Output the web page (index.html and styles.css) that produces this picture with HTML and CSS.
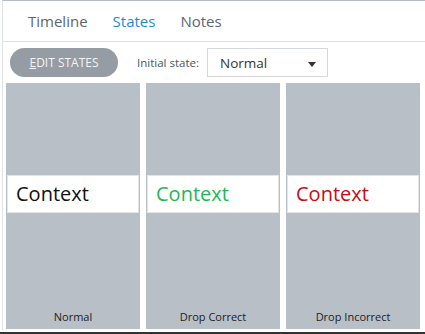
FILE: index.html
```html
<html>
<head>
<title>States</title>
<meta http-equiv="Content-Type" content="text/html; charset=utf-8"/>
<link rel="stylesheet" href="styles.css">
</head>
<body>
<div class="frame">
  <div class="tabs">
    <span class="tab">Timeline</span>
    <span class="tab active">States</span>
    <span class="tab">Notes</span>
  </div>
  <div class="toolbar">
    <span class="btn"><u>E</u>DIT STATES</span>
    <span class="label">Initial state:</span>
    <span class="select">Normal<span class="caret"></span></span>
  </div>
  <div class="cards">
    <div class="card">
      <div class="ctx black">Context</div>
      <div class="name">Normal</div>
    </div>
    <div class="card">
      <div class="ctx green">Context</div>
      <div class="name">Drop Correct</div>
    </div>
    <div class="card">
      <div class="ctx red">Context</div>
      <div class="name">Drop Incorrect</div>
    </div>
  </div>
</div>
<div class="bottom"></div>
</body>
</html>
```
FILE: styles.css
```css
body {
    margin:0;
    background:#fff;
    font-family:"Open Sans", "Noto Sans", sans-serif;
}
.frame {
    margin-left:2px;
    border-left:solid 1px #dde2e8;
    border-top:solid 1px #b5bac8;
    height:330px;
    box-sizing:border-box;
}
.tabs {
    display:flex;
    height:40px;
    border-bottom:solid 1px #e0e3e6;
    padding-left:25px;
    align-items:center;
}
.tab {
    font-size:15px;
    color:#5c6670;
    margin-right:25px;
}
.tab.active {
    color:#1a8ce0;
}
.toolbar {
    display:flex;
    align-items:center;
    height:41px;
    padding-left:7px;
}
.btn {
    display:inline-block;
    width:108px;
    height:29px;
    line-height:29px;
    border-radius:15px;
    background:#959ca4;
    color:#f4f4f4;
    font-size:12px;
    text-align:center;
}
.btn u {
    text-decoration-thickness:1px;
}
.label {
    font-size:11.5px;
    color:#4a5560;
    margin-left:19px;
}
.select {
    display:flex;
    align-items:center;
    margin-left:8px;
    width:121px;
    height:29px;
    box-sizing:border-box;
    border:solid 1px #d4d8dc;
    padding-left:12px;
    font-size:13.5px;
    color:#333;
    position:relative;
}
.caret {
    position:absolute;
    right:11px;
    top:13px;
    width:0;
    height:0;
    border-left:4px solid transparent;
    border-right:4px solid transparent;
    border-top:5px solid #333;
}
.cards {
    display:flex;
    gap:6px;
    padding-left:3px;
}
.card {
    width:134px;
    height:246px;
    background:#b9bfc6;
    display:flex;
    flex-direction:column;
    padding:92px 1px 0;
    box-sizing:border-box;
}
.ctx {
    height:38px;
    box-sizing:border-box;
    background:#fff;
    border:solid 1px #e2e4e6;
    padding-left:8px;
    line-height:35px;
    font-size:20px;
}
.black { color:#111; }
.green { color:#1db954; }
.red { color:#cc0a14; }
.name {
    margin-top:auto;
    margin-bottom:5px;
    text-align:center;
    font-size:11px;
    color:#222;
}
.bottom {
    height:2px;
    background:#333;
    margin-top:2px;
}
```
